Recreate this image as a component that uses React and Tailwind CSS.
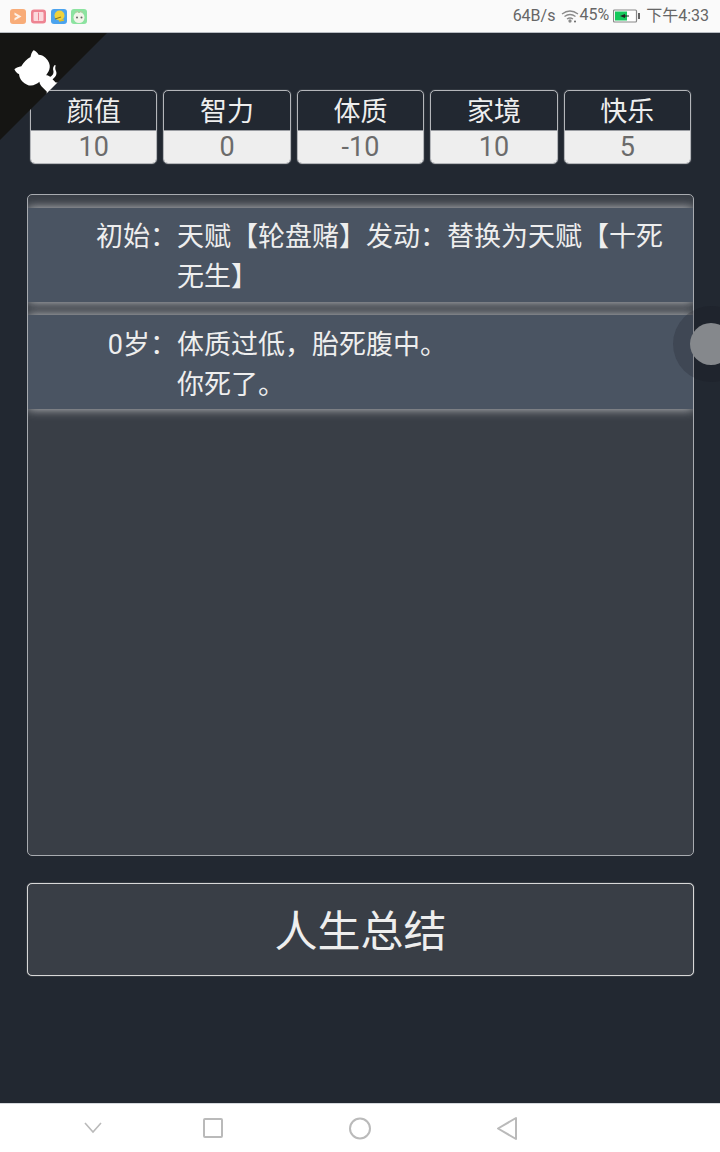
import React from 'react';

const stats = [
	{ name: '颜值', value: 10 },
	{ name: '智力', value: 0 },
	{ name: '体质', value: -10 },
	{ name: '家境', value: 10 },
	{ name: '快乐', value: 5 },
];

const rows = [
	{ label: '初始：', lines: ['天赋【轮盘赌】发动：替换为天赋【十死无生】'] },
	{ label: '0岁：', lines: ['体质过低，胎死腹中。', '你死了。'] },
];

function StatusBar() {
	return (
		<div className="h-[33px] shrink-0 bg-[#fafafa] border-b border-[#b8bcc2] flex items-center justify-between pl-[10px] pr-[11px] text-[#666] text-[16px]">
			<div className="flex items-center gap-[4px]">
				<svg width="77" height="17" viewBox="0 0 77 17">
					<rect x="0" y="1" width="16" height="15" rx="3" fill="#f8ac78" />
					<path d="M4.500 4.500l7 4-7 4v-2.500l3-1.500-3-1.500z" fill="#fdf0e6" />
					<rect x="21" y="1.500" width="15" height="14" rx="3" fill="#ee8492" />
					<rect x="23.500" y="4" width="10" height="9" rx="1" fill="#fbd9dd" />
					<path d="M28.500 4.500v8" stroke="#ee8492" strokeWidth="1" />
					<rect x="41" y="1" width="16" height="15" rx="3" fill="#4ba3ee" />
					<circle cx="49.500" cy="7.500" r="5" fill="#f0d23c" />
					<path d="M45 11l6-2" stroke="#8a7a20" strokeWidth="1.200" />
					<path d="M49 13l5-1" stroke="#e8c020" strokeWidth="1.500" />
					<rect x="61" y="1" width="16" height="15" rx="3" fill="#8ce3a0" />
					<circle cx="69" cy="9.500" r="5.500" fill="#f2f4ea" />
					<path d="M65 5l2-2 2 2 2-2 2 2" stroke="#b4c8a0" strokeWidth="1" fill="none" />
					<circle cx="67" cy="9.500" r="1" fill="#666" />
					<circle cx="71.500" cy="9.500" r="1" fill="#666" />
				</svg>
			</div>
			<div className="flex items-center">
				<span>64B/s</span>
				<svg className="ml-[6px]" width="18" height="14" viewBox="0 0 18 14" fill="none" stroke="#8a8a8a" strokeWidth="1.300">
					<path d="M1 5q8-6 16 0" />
					<path d="M3.500 7.500q5.500-4 11 0" />
					<path d="M6 10q3-2 6 0" />
					<circle cx="9" cy="12" r="1" fill="#666" />
					<circle cx="14" cy="12.500" r="1" fill="#666" stroke="none" />
				</svg>
				<span className="-mt-[3px]">45%</span>
				<svg className="ml-[4px]" width="27" height="14" viewBox="0 0 27 14">
					<rect x="0.500" y="1" width="23" height="12" rx="1" fill="#fff" stroke="#888" strokeWidth="1.200" />
					<rect x="2" y="2.500" width="12" height="9" fill="#14c95c" />
					<path d="M7 7l5-2v1.500h4v1h-4v1.500z" fill="#222" />
					<rect x="25" y="4" width="2" height="6" fill="#666" />
				</svg>
				<span className="ml-[6px]">下午4:33</span>
			</div>
		</div>
	);
}

function CornerLogo() {
	return (
		<svg className="absolute left-0 top-[33px] text-white" width="107" height="107" viewBox="0 0 250 250">
			<g transform="translate(250 0) scale(-1 1)">
				<path d="M0 0L250 250V0Z" fill="#151513" />
				<path
					d="M128.3,109.0 C113.8,99.7 119.0,89.6 119.0,89.6 C122.0,82.7 120.5,78.6 120.5,78.6 C119.2,72.0 123.4,76.3 123.4,76.3 C127.3,80.9 125.5,87.3 125.5,87.3 C122.9,97.6 130.6,101.9 134.4,103.2"
					fill="currentColor"
				/>
				<path
					d="M115.0,115.0 C114.9,115.1 118.7,116.5 119.8,115.4 L133.7,101.6 C136.9,99.2 139.9,98.4 142.2,98.6 C133.8,88.0 127.5,74.4 143.8,58.0 C148.5,53.4 154.0,51.2 159.7,51.0 C160.3,49.4 163.2,43.6 171.4,40.1 C171.4,40.1 176.1,42.5 178.8,56.2 C183.1,58.6 187.2,61.8 190.9,65.4 C194.5,69.0 197.7,73.2 200.1,77.6 C213.8,80.2 216.3,84.9 216.3,84.9 C212.7,93.1 206.9,96.0 205.4,96.6 C205.1,102.4 203.0,107.8 198.3,112.5 C181.9,128.9 168.3,122.5 157.7,114.1 C157.9,116.9 156.7,120.9 152.7,124.9 L141.0,136.5 C139.8,137.7 141.6,141.9 141.8,141.8 Z"
					fill="currentColor"
				/>
			</g>
		</svg>
	);
}

function NavBar() {
	return (
		<div className="h-[49px] shrink-0 bg-white border-t border-[#d5d8dc]">
			<svg width="720" height="48" viewBox="0 0 720 48" fill="none" stroke="#bababa" strokeWidth="2">
				<path d="M85 19l8 9 8-9" strokeWidth="1.600" />
				<rect x="204" y="15" width="18" height="18" rx="1" />
				<circle cx="360" cy="24.500" r="10" />
				<path d="M516 14v21l-18-10.500z" strokeLinejoin="round" />
			</svg>
		</div>
	);
}

export default function App() {
	return (
		<div
			className="relative w-[720px] h-[1152px] overflow-hidden flex flex-col bg-[#222831] text-[#eeeeee]"
			style={{ fontFamily: 'Roboto, "Noto Sans CJK SC", sans-serif' }}
		>
			<StatusBar />
			<div className="flex-1 flex flex-col">
				<div className="mt-[57px] ml-[30px] mr-[29px] grid grid-cols-5 gap-[6px]">
					{stats.map((stat) => (
						<div
							key={stat.name}
							className="h-[74px] rounded-[5px] border border-[#b4b6ba] shadow-[0_0_1px_#b4b6ba] overflow-hidden flex flex-col"
						>
							<div className="h-[40px] pt-[4px] flex items-center justify-center text-[27px] leading-none border-b border-[#9a9da2]">
								{stat.name}
							</div>
							<div className="flex-1 bg-[#eeeeee] text-[#6b6b6b] flex items-center justify-center text-[27px] leading-none">
								{stat.value}
							</div>
						</div>
					))}
				</div>
				<div className="mt-[30px] ml-[27px] mr-[26px] h-[662px] bg-[#393e46] rounded-[5px] border border-[#a8abb0] overflow-hidden pt-[13px] flex flex-col gap-[13px]">
					{rows.map((row) => (
						<div
							key={row.label}
							className="flex bg-[#4a5462] pt-[10px] pb-[4px] first:pt-[9px] first:pb-[5px] text-[27px] leading-[40px] shadow-[0_0_10px_rgba(238,238,238,0.8)]"
						>
							<div className="w-[149px] shrink-0 text-right">{row.label}</div>
							<div className="flex-1 pr-[28px]">
								{row.lines.map((line) => (
									<div key={line}>{line}</div>
								))}
							</div>
						</div>
					))}
				</div>
				<button className="mt-[27px] ml-[27px] mr-[26px] h-[93px] pt-[5px] bg-[#393e46] rounded-[5px] border border-[#d8d8d8] shadow-[0_0_1px_#d8d8d8] text-[43px] text-[#eeeeee]">
					人生总结
				</button>
			</div>
			<NavBar />
			<CornerLogo />
			{/* floating ball on the right edge */}
			<div className="absolute left-[673px] top-[306px] w-[76px] h-[76px] rounded-full bg-[rgba(20,22,28,0.2)] flex items-center justify-center">
				<div className="w-[42px] h-[42px] rounded-full bg-[#85888c]" />
			</div>
		</div>
	);
}
